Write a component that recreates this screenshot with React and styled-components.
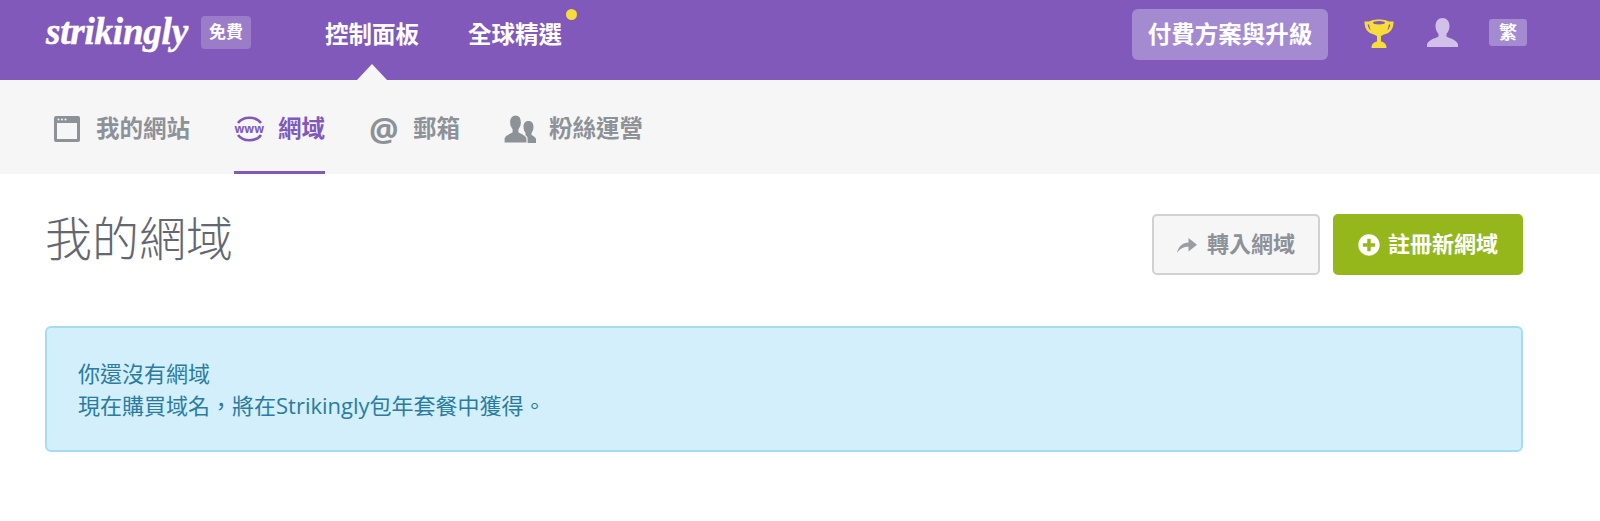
import React from 'react'
import styled, { createGlobalStyle } from 'styled-components'
import { FaPlusCircle } from 'react-icons/fa'

const GlobalStyle = createGlobalStyle`
  html, body {
    margin: 0;
    padding: 0;
    background: #fff;
    font-family: "Open Sans", "Noto Sans CJK TC", sans-serif;
  }
  * { box-sizing: border-box; }
`

const Header = styled.header`
  height: 80px;
  background: #8159ba;
  display: flex;
  align-items: center;
  padding: 0 73px 0 46px;
  color: #fff;
`

const Logo = styled.div`
  width: 145px;
  margin-top: -16px;
  font-family: "Liberation Serif", serif;
  font-style: italic;
  font-weight: 700;
  font-size: 37px;
  line-height: 44px;
  letter-spacing: -0.2px;
  -webkit-text-stroke: 0.5px #fff;
`

const PlanBadge = styled.span`
  width: 50px;
  height: 33px;
  margin: -16px 0 0 10px;
  border-radius: 4px;
  background: #9a7cc9;
  font-size: 17px;
  font-weight: 700;
  line-height: 32px;
  text-align: center;
`

const MainNav = styled.nav`
  display: flex;
  gap: 49px;
  margin: -12px 0 0 74px;
  flex: 1;
`

const MainLink = styled.a`
  position: relative;
  font-size: 23.5px;
  font-weight: 700;
  line-height: 32px;
`

const NewDot = styled.span`
  position: absolute;
  top: -9px;
  right: -15px;
  width: 11px;
  height: 11px;
  border-radius: 50%;
  background: #f6dd3b;
`

const Caret = styled.span`
  position: absolute;
  left: 32px;
  top: 46px;
  width: 0;
  height: 0;
  border-left: 15px solid transparent;
  border-right: 15px solid transparent;
  border-bottom: 16px solid #f6f6f6;
`

const UpgradeButton = styled.a`
  width: 196px;
  height: 51px;
  margin-top: -11px;
  border-radius: 6px;
  background: #a48bd1;
  font-size: 23.5px;
  font-weight: 700;
  line-height: 50px;
  text-align: center;
`

const TrophyWrap = styled.span`
  display: flex;
  margin: -13px 0 0 36px;
`

const UserWrap = styled.span`
  display: flex;
  margin: -15px 0 0 33px;
`

const LangBadge = styled.span`
  width: 38px;
  height: 27px;
  margin: -15px 0 0 31px;
  border-radius: 3px;
  background: #a48bd1;
  font-size: 18px;
  font-weight: 700;
  line-height: 27px;
  text-align: center;
`

const SubNav = styled.nav`
  height: 94px;
  background: #f6f6f6;
  display: flex;
  gap: 44px;
  padding-left: 54px;
`

const SubItem = styled.a`
  height: 94px;
  display: flex;
  align-items: center;
  gap: ${p => p.$gap}px;
  padding-top: 7px;
  border-bottom: 3px solid ${p => (p.$active ? '#8159ba' : 'transparent')};
  color: ${p => (p.$active ? '#8159ba' : '#8d9198')};
  font-size: 23.5px;
  font-weight: 700;
`

const SubLabel = styled.span`
  margin-bottom: 4px;
`

const AtGlyph = styled.span`
  width: 28px;
  font-family: "Open Sans", sans-serif;
  font-size: 33px;
  font-weight: 700;
  line-height: 34px;
  text-align: center;
`

const Main = styled.main`
  padding: 40px 77px 0 45px;
`

const TitleRow = styled.div`
  display: flex;
  align-items: flex-start;
  justify-content: space-between;
`

const Title = styled.h1`
  margin: 0;
  color: #63676f;
  font-size: 47px;
  font-weight: 300;
  line-height: 48px;
`

const Actions = styled.div`
  display: flex;
  gap: 13px;
`

const ActionButton = styled.a`
  height: 61px;
  width: ${p => p.$width}px;
  display: flex;
  align-items: center;
  justify-content: center;
  gap: ${p => (p.$primary ? 8 : 10)}px;
  border-radius: 5px;
  border: 2px solid ${p => (p.$primary ? '#95b71c' : '#d0d1d4')};
  background: ${p => (p.$primary ? '#95b71c' : '#f6f6f6')};
  color: ${p => (p.$primary ? '#fff' : '#8d9198')};
  font-size: 22px;
  font-weight: 700;
`

const ButtonLabel = styled.span`
  margin-bottom: 6px;
`

const Alert = styled.div`
  height: 126px;
  margin-top: 51px;
  padding: 29px 31px;
  border: 2px solid #a5dcf0;
  border-radius: 6px;
  background: #d2effb;
  color: #2b7c9e;
  font-size: 22px;
  line-height: 32px;
`

const WindowIcon = () => (
  <svg width="26" height="26" viewBox="0 0 26 26" fill="#8d9198">
    <path fillRule="evenodd" d="M2 0h22a2 2 0 0 1 2 2v22a2 2 0 0 1-2 2H2a2 2 0 0 1-2-2V2a2 2 0 0 1 2-2zm1 7v16h20V7z" />
    <circle cx="4.5" cy="3.6" r="1" fill="#f6f6f6" />
    <circle cx="8" cy="3.6" r="1" fill="#f6f6f6" />
    <circle cx="11.5" cy="3.6" r="1" fill="#f6f6f6" />
  </svg>
)

const WwwIcon = () => (
  <svg width="31" height="28" viewBox="0 0 31 28">
    <path d="M4 8C9 1 22 1 27 8" fill="none" stroke="#8159ba" strokeWidth="2.6" />
    <path d="M4 20C9 27 22 27 27 20" fill="none" stroke="#8159ba" strokeWidth="2.6" />
    <text x="0.5" y="18" fill="#8159ba" fontSize="11.500" fontWeight="700">www</text>
  </svg>
)

const PeopleIcon = () => (
  <svg width="32" height="28" viewBox="0 0 32 28" fill="#8d9198">
    <path d="M24.500 6C28 6 29.500 8.500 29.500 12C29.500 14.500 28.500 16.500 27.500 18V20C29.500 21 31.500 22 32 24V28H17V24C17.500 22 19.500 21 21.500 20V18C20.500 16.500 19.500 14.500 19.500 12C19.500 8.500 21 6 24.500 6z" />
    <path stroke="#f6f6f6" strokeWidth="1.2" d="M11.500 0C15.500 0 17.500 3 17.500 7.500C17.500 10.500 16.500 13 15 14.500V17C18 18.500 22 20 23 23V28H0V23C1 20 5 18.500 8 17V14.500C6.500 13 5.500 10.500 5.500 7.500C5.500 3 7.500 0 11.500 0z" />
  </svg>
)

const UserIcon = () => (
  <svg width="31" height="29" viewBox="0 0 31 29" fill="#d1c0e8">
    <path d="M15.500 0C19.500 0 22.500 3 22.500 8C22.500 11.500 21 14.500 19.500 16V18.500C23 20.500 29 21.500 31 26V29H0V26C2 21.500 8 20.500 11.500 18.500V16C10 14.500 8.500 11.500 8.500 8C8.500 3 11.500 0 15.500 0z" />
  </svg>
)

const TrophyIcon = () => (
  <svg width="30" height="30" viewBox="0 0 30 30" fill="#f6dd3b">
    <path d="M7 4H2C2 9 5 13 10 14M23 4H28C28 9 25 13 20 14" fill="none" stroke="#f6dd3b" strokeWidth="3" />
    <path d="M5 3.500C5 1.500 10 .5 15 .5S25 1.500 25 3.500C25 10 21.500 15.500 17 17V22.500C20 23 22.500 25 22.500 29H7.500C7.500 25 10 23 13 22.500V17C8.500 15.500 5 10 5 3.500z" />
    <ellipse cx="15" cy="3.800" rx="6" ry="1.700" fill="#8159ba" />
  </svg>
)

const ShareIcon = () => (
  <svg width="20" height="16" viewBox="0 0 20 16" fill="#9a9da3">
    <path d="M0 16C1.500 9 6 5.500 11.500 5.500V1L20 7.800L11.500 14.500V9.800C7 9.800 3 11.500 0 16z" />
  </svg>
)

const subItems = [
  { label: '我的網站', icon: <WindowIcon />, gap: 16 },
  { label: '網域', icon: <WwwIcon />, gap: 13, active: true },
  { label: '郵箱', icon: <AtGlyph>@</AtGlyph>, gap: 16 },
  { label: '粉絲運營', icon: <PeopleIcon />, gap: 13 },
]

export default function App() {
  return (
    <>
      <GlobalStyle />
      <Header>
        <Logo>strikingly</Logo>
        <PlanBadge>免費</PlanBadge>
        <MainNav>
          <MainLink>
            控制面板
            <Caret />
          </MainLink>
          <MainLink>
            全球精選
            <NewDot />
          </MainLink>
        </MainNav>
        <UpgradeButton>付費方案與升級</UpgradeButton>
        <TrophyWrap><TrophyIcon /></TrophyWrap>
        <UserWrap><UserIcon /></UserWrap>
        <LangBadge>繁</LangBadge>
      </Header>
      <SubNav>
        {subItems.map(item => (
          <SubItem key={item.label} $active={item.active} $gap={item.gap}>
            {item.icon}
            <SubLabel>{item.label}</SubLabel>
          </SubItem>
        ))}
      </SubNav>
      <Main>
        <TitleRow>
          <Title>我的網域</Title>
          <Actions>
            <ActionButton $width={168}>
              <ShareIcon />
              <ButtonLabel>轉入網域</ButtonLabel>
            </ActionButton>
            <ActionButton $primary $width={190}>
              <FaPlusCircle size={22} />
              <ButtonLabel>註冊新網域</ButtonLabel>
            </ActionButton>
          </Actions>
        </TitleRow>
        <Alert>
          你還沒有網域
          <br />
          現在購買域名，將在Strikingly包年套餐中獲得。
        </Alert>
      </Main>
    </>
  )
}
